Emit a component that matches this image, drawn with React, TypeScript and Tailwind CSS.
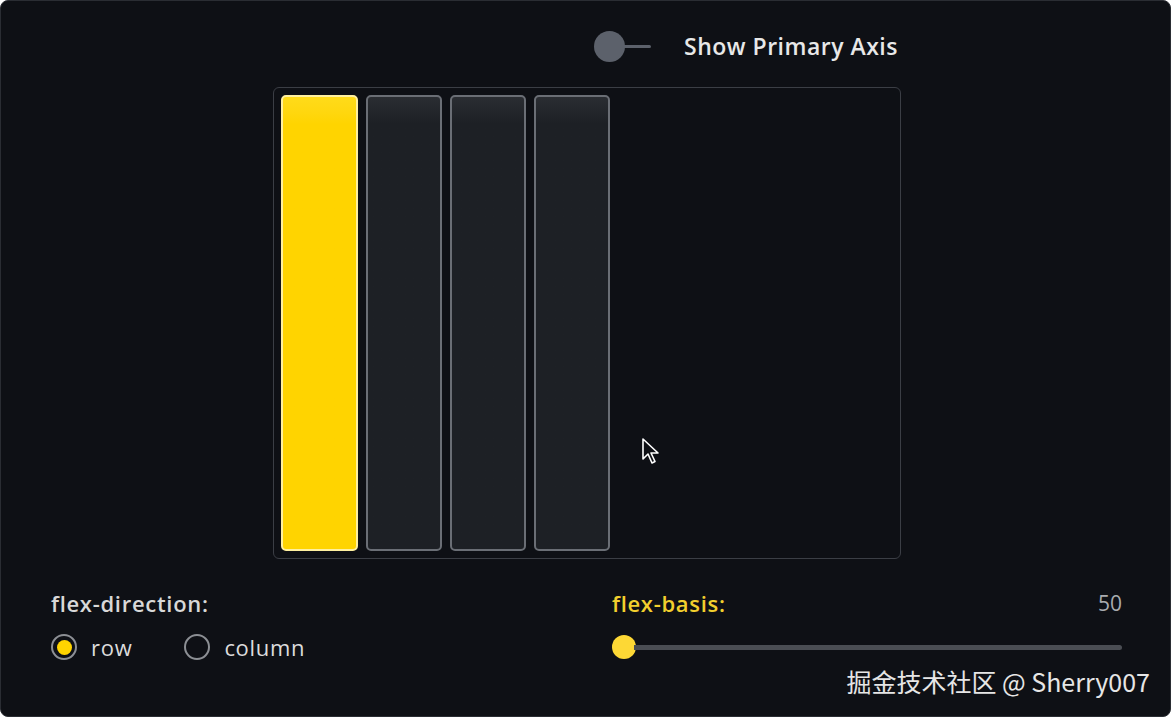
const items = [0, 1, 2, 3]

export default function App() {
  return (
    <div className="h-[720px] w-[1173px] bg-white" style={{ fontFamily: '"Open Sans", "Noto Sans CJK SC", sans-serif' }}>
      <div className="relative flex h-[717px] w-[1171px] flex-col rounded-lg border border-[#2a2d33] bg-[#0e1015]">
        {/* toggle */}
        <div className="flex h-[86px] items-center pt-[4px] pl-[593px]">
          <div className="flex items-center">
            <div className="h-[31px] w-[31px] rounded-full bg-[#5c616b]" />
            <div className="-ml-px h-[3px] w-[27px] rounded-r bg-[#5c616b]" />
          </div>
          <span className="ml-[33px] text-[23px] leading-[30px] font-semibold tracking-[0.5px] text-[#e8e8e8]">Show Primary Axis</span>
        </div>

        {/* flex container */}
        <div className="ml-[272px] flex h-[472px] w-[628px] gap-[8px] rounded-md border-[1.5px] border-[#3b3e45] p-[7px]">
          {items.map((i) =>
            i === 0 ? (
              <div
                key={i}
                className="w-[77px] rounded-[5px] border-2 border-[#fff0a0] bg-gradient-to-b from-[#ffdb1a] from-[0%] via-[#ffd400] via-[6%] to-[#ffd400]"
              />
            ) : (
              <div
                key={i}
                className="w-[76px] rounded-[5px] border-2 border-[#6a6e75] bg-gradient-to-b from-[#2a2d32] from-[0%] via-[#1d2025] via-[6%] to-[#1d2025]"
              />
            )
          )}
        </div>

        {/* controls */}
        <div className="mt-[29px] flex">
          <div className="w-[611px] pl-[50px]">
            <div className="text-[22px] leading-[30px] font-semibold tracking-[0.7px] text-[#d8d8d8]">flex-direction:</div>
            <div className="mt-[16px] flex h-[26px] items-center">
              <div className="flex h-[26px] w-[26px] items-center justify-center rounded-full border-2 border-[#8c8f94]">
                <div className="h-[15px] w-[15px] rounded-full bg-[#ffd400]" />
              </div>
              <span className="ml-[14px] text-[22px] leading-[26px] tracking-[0.7px] text-[#dcdcdc]">row</span>
              <div className="ml-[52px] h-[26px] w-[26px] rounded-full border-2 border-[#8c8f94]" />
              <span className="ml-[14px] text-[22px] leading-[26px] tracking-[0.7px] text-[#dcdcdc]">column</span>
            </div>
          </div>
          <div className="w-[510px]">
            <div className="flex h-[30px] items-center justify-between">
              <span className="text-[22px] leading-[30px] font-semibold tracking-[0.7px] text-[#f2cf2e]">flex-basis:</span>
              <span className="text-[21px] leading-[30px] text-[#a9abaf]">50</span>
            </div>
            <div className="mt-[16px] flex h-[26px] items-center">
              <div className="h-[24px] w-[24px] rounded-full bg-[#fdd835]" />
              <div className="-ml-[2px] h-[5px] flex-1 rounded-r-full bg-[#4a4d53]" />
            </div>
          </div>
        </div>

        {/* watermark */}
        <div
          className="absolute right-[20px] top-[662px] text-[25px] leading-[36px] text-[#e6e6e6]"
          style={{ fontFamily: '"Noto Sans CJK SC", sans-serif' }}
        >
          掘金技术社区 @ Sherry007
        </div>

        {/* cursor */}
        <div className="absolute left-[640px] top-[436px]">
          <svg width="22" height="28" viewBox="0 0 22 28">
            <path d="M2 2 L2 22 L7 17 L11 26 L14 24.5 L10 16 L17 16 Z" fill="#0e1015" stroke="#ffffff" strokeWidth="1.6" strokeLinejoin="round" />
          </svg>
        </div>
      </div>
    </div>
  )
}
